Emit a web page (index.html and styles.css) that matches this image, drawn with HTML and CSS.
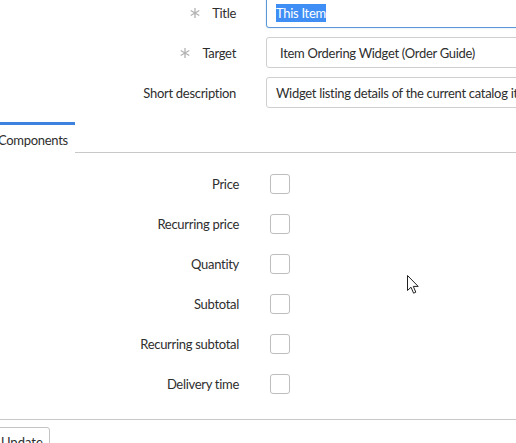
FILE: index.html
```
<!DOCTYPE html>
<html>
<head>
<meta charset="utf-8">
<link rel="stylesheet" href="styles.css">
</head>
<body>
<div class="page">
  <div class="form">
    <div class="row">
      <div class="label"><svg class="req" viewBox="0 0 10 10"><path d="M5 0V10M0.7 2.5L9.3 7.5M0.7 7.5L9.3 2.5"/></svg><span>Title</span></div>
      <div class="input focus"><span class="sel">This Item</span></div>
    </div>
    <div class="row">
      <div class="label"><svg class="req" viewBox="0 0 10 10"><path d="M5 0V10M0.7 2.5L9.3 7.5M0.7 7.5L9.3 2.5"/></svg><span>Target</span></div>
      <div class="input ref">Item Ordering Widget (Order Guide)</div>
    </div>
    <div class="row">
      <div class="label"><span>Short description</span></div>
      <div class="input">Widget listing details of the current catalog item</div>
    </div>
  </div>

  <div class="tabs">
    <div class="tab">Components</div>
    <div class="tab-rest"></div>
  </div>

  <div class="checks">
    <div class="crow"><div class="clabel">Price</div><div class="box"></div></div>
    <div class="crow"><div class="clabel">Recurring price</div><div class="box"></div></div>
    <div class="crow"><div class="clabel">Quantity</div><div class="box"></div></div>
    <div class="crow"><div class="clabel">Subtotal</div><div class="box"></div></div>
    <div class="crow"><div class="clabel">Recurring subtotal</div><div class="box"></div></div>
    <div class="crow"><div class="clabel">Delivery time</div><div class="box"></div></div>
  </div>

  <div class="footer">
    <button class="btn">Update</button>
  </div>

  <svg class="cursor" viewBox="0 0 12 19" width="12" height="19"><path d="M0.5 0.5V15.5L4 12.2L6.6 18.2L8.8 17.2L6.3 11.4H11.2Z" fill="#fff" stroke="#222" stroke-width="1" stroke-linejoin="round"/></svg>
</div>
</body>
</html>
```

FILE: styles.css
```
html, body {
  margin: 0;
  padding: 0;
  background: #fff;
}
body {
  width: 516px;
  height: 443px;
  overflow: hidden;
  font-family: "Lato", "Open Sans", sans-serif;
  font-size: 13px;
  letter-spacing: -0.3px;
  color: #2e2e2e;
}
.page {
  position: relative;
  width: 516px;
  height: 443px;
}
.form {
  margin-top: -3px;
  display: flex;
  flex-direction: column;
  gap: 9px;
}
.row {
  display: grid;
  grid-template-columns: 236px 1fr;
  column-gap: 30px;
  height: 31px;
  align-items: center;
}
.label {
  display: flex;
  justify-content: flex-end;
  align-items: center;
  gap: 12px;
  padding-top: 1px;
}
.req {
  width: 10px;
  height: 10px;
  stroke: #b3b3b3;
  stroke-width: 1.3;
  fill: none;
}
.input {
  box-sizing: border-box;
  width: 420px;
  height: 31px;
  border: 1px solid #cfcfcf;
  border-radius: 3px;
  padding: 0 9px;
  display: flex;
  align-items: center;
  white-space: nowrap;
  overflow: hidden;
  color: #2e2e2e;
}
.input.ref {
  padding-left: 13px;
}
.input.focus {
  border-color: #5b98d8;
  box-shadow: 0 0 1px #5b98d8;
  padding-top: 0;
}
.sel {
  background: #3f8ef5;
  color: #fff;
  padding: 1px 0;
}
.tabs {
  margin-top: 14px;
  display: flex;
  height: 31px;
}
.tab {
  box-sizing: border-box;
  width: 77px;
  border-top: 3px solid #3d82de;
  margin-left: -2px;
  padding-top: 7px;
}
.tab-rest {
  flex: 1;
  border-bottom: 1px solid #c8c8c8;
}
.checks {
  padding-top: 11px;
  display: flex;
  flex-direction: column;
}
.crow {
  display: flex;
  align-items: center;
  height: 40px;
}
.clabel {
  width: 239px;
  text-align: right;
}
.box {
  box-sizing: border-box;
  margin-left: 31px;
  width: 20px;
  height: 20px;
  border: 1px solid #bdbdbd;
  border-radius: 3px;
  background: #fff;
}
.footer {
  margin-top: 15px;
  border-top: 1px solid #c8c8c8;
  padding-top: 7px;
}
.btn {
  margin-left: -10px;
  box-sizing: border-box;
  width: 60px;
  height: 30px;
  border: 1px solid #c4c4c4;
  border-radius: 3px;
  background: #fff;
  font: inherit;
  color: #2e2e2e;
  padding: 0 0 0 10px;
  text-align: left;
}
.cursor {
  position: absolute;
  left: 407px;
  top: 278px;
}
```
